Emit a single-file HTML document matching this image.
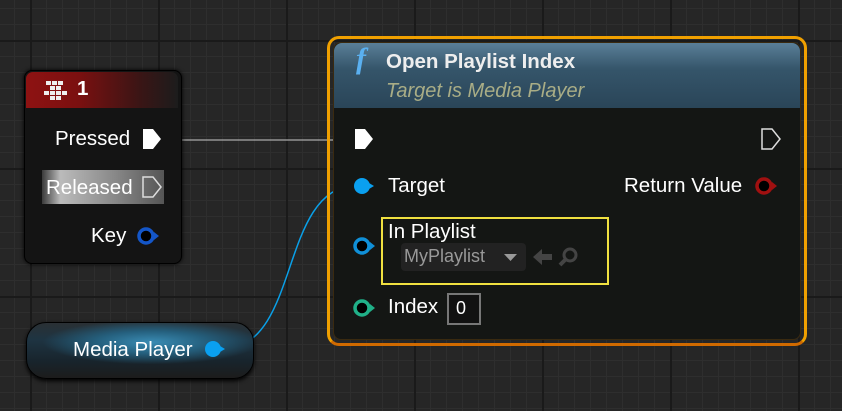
<!DOCTYPE html><html><head><style>
body{margin:0;width:842px;height:411px;overflow:hidden;background:#262626;font-family:"Liberation Sans",sans-serif;position:relative;
background-image:linear-gradient(#1a1a1a 2px,transparent 2px),linear-gradient(90deg,#1a1a1a 2px,transparent 2px),linear-gradient(#2e2e2e 1px,transparent 1px),linear-gradient(90deg,#2e2e2e 1px,transparent 1px);
background-size:128px 128px,128px 128px,16px 16px,16px 16px;background-position:30px 40px,30px 40px,14px 8px,14px 8px}
.a{position:absolute}
.t{color:#fff;font-size:20.5px;position:absolute;white-space:nowrap}
</style></head><body>
<svg class="a" style="left:0;top:0" width="842" height="411">
<line x1="162" y1="140" x2="345" y2="140" stroke="#aaa" stroke-width="1.3"/>
<path d="M228 349 C 300 340, 280 190, 355 185" fill="none" stroke="#0aa0e8" stroke-width="1.5"/>
</svg>
<!-- key node -->
<div class="a" style="left:24px;top:70px;width:156px;height:192px;background:#141414;border:1px solid #000;border-radius:8px;box-shadow:0 0 4px #000"></div>
<div class="a" style="left:26px;top:72px;width:152px;height:36px;border-radius:7px 7px 0 0;background:linear-gradient(90deg,#8e1212 0%,#7a1010 35%,#3a1515 75%,#1c1c1c 100%)"></div>
<svg class="a" style="left:43px;top:80px" width="26" height="24" fill="#eee"><rect x="3" y="1" width="5" height="4"/><rect x="9" y="1" width="5" height="4"/><rect x="15" y="1" width="5" height="4"/><rect x="7" y="6" width="5" height="4"/><rect x="13" y="6" width="5" height="4"/><rect x="1" y="11" width="5" height="4"/><rect x="7" y="11" width="5" height="4"/><rect x="13" y="11" width="5" height="4"/><rect x="19" y="11" width="5" height="4"/><rect x="7" y="16" width="5" height="4"/><rect x="13" y="16" width="5" height="4"/></svg>
<div class="t" style="left:77px;top:77px;font-weight:bold">1</div>
<div class="t" style="left:55px;top:127px">Pressed</div>
<svg class="a" style="left:141px;top:127px" width="22" height="24"><path d="M2 2h10l8 10-8 10H2z" fill="#fff"/></svg>
<div class="a" style="left:42px;top:170px;width:122px;height:34px;background:linear-gradient(90deg,#3a3a3a,#bbb 15%,#888 60%,#555)"></div>
<div class="t" style="left:46px;top:176px">Released</div>
<svg class="a" style="left:141px;top:175px" width="22" height="24"><path d="M2 2h10l8 10-8 10H2z" fill="none" stroke="#ddd" stroke-width="1.5"/></svg>
<div class="t" style="left:91px;top:224px">Key</div>
<svg class="a" style="left:136px;top:226px" width="26" height="20"><circle cx="10" cy="10" r="7" fill="#000" stroke="#1456c8" stroke-width="3.5"/><path d="M18 6l5 4-5 4z" fill="#1456c8"/></svg>
<!-- media player -->
<div class="a" style="left:26px;top:322px;width:226px;height:55px;border-radius:20px;background:radial-gradient(ellipse 60% 50% at 55% 35%,#3a8cb4 0%,#25607e 40%,transparent 80%),linear-gradient(180deg,#2a3034 0%,#1e3442 30%,#18242c 70%,#1c1c1c 100%);border:1px solid #000;box-shadow:0 2px 4px #000"></div>
<div class="t" style="left:73px;top:338px">Media Player</div>
<svg class="a" style="left:203px;top:338px" width="28" height="22"><circle cx="10" cy="11" r="8" fill="#0aa0f0"/><path d="M17 8l5 3-5 3z" fill="#0aa0f0"/></svg>
<!-- function node -->
<div class="a" style="left:327px;top:36px;width:474px;height:304px;border:3px solid #f0a000;border-radius:12px;border-bottom-color:#d06a00"></div>
<div class="a" style="left:333px;top:42px;width:466px;height:296px;background:#141614;border-radius:8px;border:1px solid #3a2a10"></div>
<div class="a" style="left:334px;top:43px;width:466px;height:65px;border-radius:8px 8px 0 0;background:linear-gradient(180deg,#5a7f98 0%,#35556a 40%,#2a4558 100%)"></div>
<div class="t" style="left:356px;top:42px;font-family:'Liberation Serif',serif;font-style:italic;font-weight:bold;font-size:30px;color:#5ab0f0">f</div>
<div class="t" style="left:386px;top:50px;font-weight:bold;font-size:20.5px;color:#eee">Open Playlist Index</div>
<div class="t" style="left:386px;top:80px;font-style:italic;color:#a9ad86;font-size:20px">Target is Media Player</div>
<svg class="a" style="left:353px;top:127px" width="22" height="24"><path d="M2 2h10l8 10-8 10H2z" fill="#fff"/></svg>
<svg class="a" style="left:760px;top:127px" width="22" height="24"><path d="M2 2h10l8 10-8 10H2z" fill="none" stroke="#ddd" stroke-width="1.5"/></svg>
<svg class="a" style="left:352px;top:175px" width="28" height="22"><circle cx="10" cy="11" r="8" fill="#0aa0f0"/><path d="M17 8l5 3-5 3z" fill="#0aa0f0"/></svg>
<div class="t" style="left:388px;top:174px">Target</div>
<div class="t" style="left:624px;top:174px">Return Value</div>
<svg class="a" style="left:754px;top:176px" width="28" height="20"><circle cx="10" cy="10" r="7" fill="#000" stroke="#a01010" stroke-width="3.5"/><path d="M18 6l5 4-5 4z" fill="#a01010"/></svg>
<svg class="a" style="left:352px;top:236px" width="26" height="20"><circle cx="10" cy="10" r="7" fill="#000" stroke="#1090d8" stroke-width="3.5"/><path d="M18 6l5 4-5 4z" fill="#1090d8"/></svg>
<div class="a" style="left:381px;top:217px;width:224px;height:64px;border:2px solid #f0e040"></div>
<div class="t" style="left:388px;top:220px">In Playlist</div>
<div class="a" style="left:401px;top:243px;width:125px;height:28px;background:#222;border-radius:4px"></div>
<div class="t" style="left:404px;top:246px;color:#999;font-size:18px">MyPlaylist</div>
<svg class="a" style="left:503px;top:253px" width="16" height="10"><path d="M1 1h13l-6.5 7z" fill="#999"/></svg>
<svg class="a" style="left:532px;top:247px" width="22" height="20"><path d="M1 10l9-8v5h10v6H10v5z" fill="#444"/></svg>
<svg class="a" style="left:558px;top:246px" width="22" height="22"><circle cx="12" cy="9" r="6" fill="none" stroke="#444" stroke-width="3"/><path d="M7 14l-5 5" stroke="#444" stroke-width="4"/></svg>
<svg class="a" style="left:352px;top:298px" width="26" height="20"><circle cx="10" cy="10" r="7" fill="#000" stroke="#20b088" stroke-width="3.5"/><path d="M18 6l5 4-5 4z" fill="#20b088"/></svg>
<div class="t" style="left:388px;top:295px">Index</div>
<div class="a" style="left:447px;top:293px;width:30px;height:28px;border:2px solid #777;background:#111"></div>
<div class="t" style="left:456px;top:298px;font-size:18px">0</div>
</body></html>
